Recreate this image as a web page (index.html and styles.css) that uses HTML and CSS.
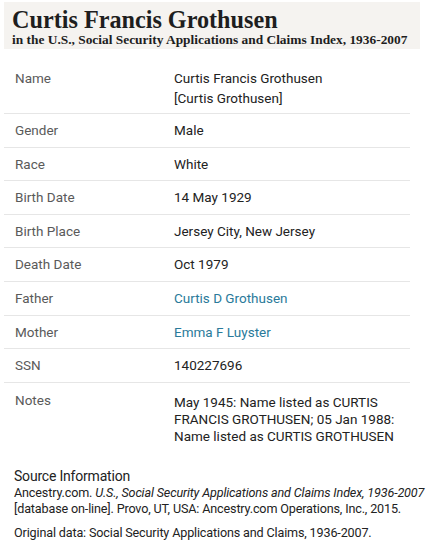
FILE: index.html
```html
<!DOCTYPE html>
<html>
<head>
<meta charset="utf-8">
<link rel="stylesheet" href="styles.css">
</head>
<body>
<div class="page">
  <header class="head">
    <h1 class="title">Curtis Francis Grothusen</h1>
    <div class="subtitle">in the U.S., Social Security Applications and Claims Index, 1936-2007</div>
  </header>
  <div class="table">
    <div class="row first"><div class="label">Name</div><div class="value">Curtis Francis Grothusen<div class="alt">[Curtis Grothusen]</div></div></div>
    <div class="row"><div class="label">Gender</div><div class="value">Male</div></div>
    <div class="row"><div class="label">Race</div><div class="value">White</div></div>
    <div class="row"><div class="label">Birth Date</div><div class="value">14 May 1929</div></div>
    <div class="row"><div class="label">Birth Place</div><div class="value">Jersey City, New Jersey</div></div>
    <div class="row"><div class="label">Death Date</div><div class="value">Oct 1979</div></div>
    <div class="row"><div class="label">Father</div><div class="value"><a class="link">Curtis D Grothusen</a></div></div>
    <div class="row"><div class="label">Mother</div><div class="value"><a class="link">Emma F Luyster</a></div></div>
    <div class="row"><div class="label">SSN</div><div class="value">140227696</div></div>
    <div class="row last"><div class="label">Notes</div><div class="value">May 1945: Name listed as CURTIS FRANCIS GROTHUSEN; 05 Jan 1988: Name listed as CURTIS GROTHUSEN</div></div>
  </div>
  <section class="source">
    <h2 class="source-title">Source Information</h2>
    <p class="cite">Ancestry.com. <i>U.S., Social Security Applications and Claims Index, 1936-2007</i> [database on-line]. Provo, UT, USA: Ancestry.com Operations, Inc., 2015.</p>
    <p class="cite">Original data: Social Security Applications and Claims, 1936-2007.</p>
  </section>
</div>
</body>
</html>
```
FILE: styles.css
```css
html, body {
  margin: 0;
  padding: 0;
  background: #ffffff;
}
.page {
  font-family: Roboto, "Liberation Sans", sans-serif;
  color: #222222;
  padding: 2px 0 0 4px;
}
.head {
  background: #f5f3f0;
  padding: 5px 8px 3px 8px;
  height: 39px;
  width: 400px;
}
.title {
  margin: 0;
  font-family: "Liberation Serif", serif;
  font-weight: bold;
  font-size: 24.2px;
  line-height: 25px;
  color: #1e1e1e;
}
.subtitle {
  font-family: "Liberation Serif", serif;
  font-weight: bold;
  font-size: 13.4px;
  line-height: 16px;
  color: #1e1e1e;
  white-space: nowrap;
}
.table {
  margin-top: 13px;
  width: 406px;
}
.row {
  display: flex;
  padding: 8px 0 7.6px 0;
  border-bottom: 1px solid #e6e6e6;
  font-size: 13.5px;
  line-height: 17px;
}
.row.first {
  padding-bottom: 6px;
}
.row.last {
  border-bottom: none;
}
.label {
  width: 159px;
  padding-left: 11px;
  color: #5a5a5a;
}
.value {
  flex: 1;
  color: #222222;
}
.alt {
  margin-top: 3px;
}
.row.last .value {
  padding-top: 3.5px;
  line-height: 16.7px;
}
.row.last .label {
  padding-top: 1px;
}
.link {
  color: #2a7a9a;
}
.source {
  padding: 16px 0 0 10px;
}
.source-title {
  margin: 0;
  font-size: 14px;
  font-weight: normal;
  line-height: 17px;
  color: #222;
  letter-spacing: -0.2px;
}
.cite {
  margin: 0 0 8px 0;
  font-size: 12.6px;
  line-height: 16px;
  color: #222;
  letter-spacing: -0.15px;
  max-width: 418px;
}
```
